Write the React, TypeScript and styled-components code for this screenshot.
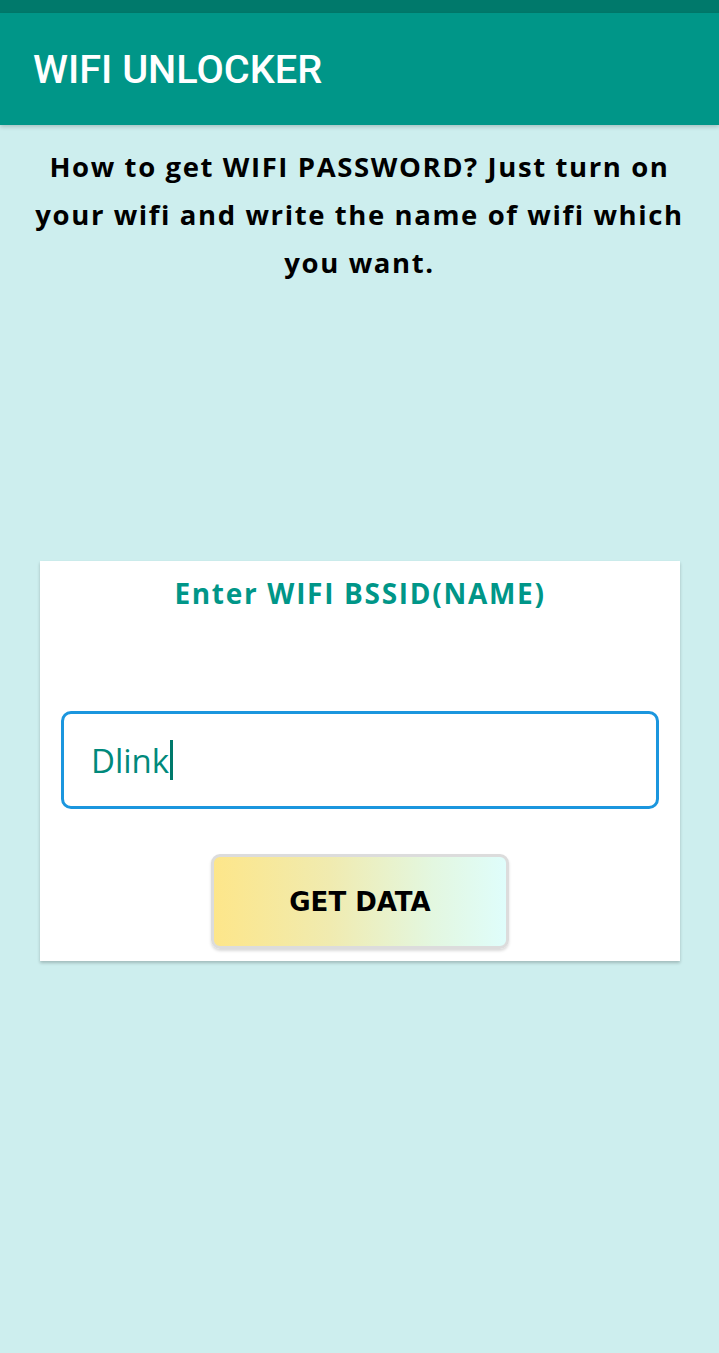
import React from "react";
import styled, { createGlobalStyle } from "styled-components";

const Global = createGlobalStyle`
  html, body { margin: 0; padding: 0; }
  body { background: #cdeeee; }
  #root { min-height: 1353px; }
`;

const Page = styled.div`
  min-height: 1353px;
  background: #cdeeee;
  display: flex;
  flex-direction: column;
`;

const StatusBar = styled.div`
  height: 13px;
  background: #00796b;
`;

const AppBar = styled.header`
  height: 112px;
  background: #009688;
  display: flex;
  align-items: center;
  padding: 0 33px;
  box-shadow: 0 2px 4px rgba(0, 0, 0, 0.18);
  position: relative;
  z-index: 1;
`;

const AppTitle = styled.h1`
  margin: 0;
  font-family: Roboto, "Liberation Sans", sans-serif;
  font-weight: 500;
  font-size: 39.7px;
  color: #ffffff;
  letter-spacing: 0;
`;

const Intro = styled.p`
  margin: 18px 30px 0;
  font-family: "Open Sans", "DejaVu Sans", sans-serif;
  font-weight: 700;
  font-size: 27.5px;
  line-height: 48px;
  color: #000;
  text-align: center;
  letter-spacing: 1.6px;
`;

const Card = styled.section`
  margin: 274px 39px 0 40px;
  height: 400px;
  background: #fff;
  box-shadow: 0 2px 3px rgba(0, 0, 0, 0.22);
  display: flex;
  flex-direction: column;
  align-items: center;
  padding: 14px 21px 0;
  box-sizing: border-box;
`;

const CardTitle = styled.h2`
  margin: 0;
  font-family: "Open Sans", "DejaVu Sans", sans-serif;
  font-weight: 700;
  font-size: 28px;
  line-height: 36px;
  color: #009688;
  letter-spacing: 1.7px;
`;

const InputBox = styled.div`
  margin-top: 100px;
  align-self: stretch;
  height: 98px;
  box-sizing: border-box;
  border: 3px solid #1b96de;
  border-radius: 10px;
  display: flex;
  align-items: center;
  padding: 0 27px;
`;

const InputText = styled.span`
  font-family: "Open Sans", Roboto, sans-serif;
  font-size: 33px;
  color: #00897b;
  display: flex;
  align-items: center;
`;

const Caret = styled.span`
  display: inline-block;
  width: 3px;
  height: 40px;
  background: #00796b;
  margin-left: 1px;
`;

const Button = styled.button`
  margin-top: 45px;
  width: 298px;
  height: 95px;
  box-sizing: border-box;
  border: 3px solid #dcdcdc;
  border-radius: 9px;
  background: linear-gradient(90deg, #fde68a 0%, #f0ebb0 40%, #e3f7e0 75%, #dffdfb 100%);
  box-shadow: 0 2px 3px rgba(0, 0, 0, 0.15);
  font-family: "DejaVu Sans", Verdana, sans-serif;
  font-weight: 700;
  font-size: 26px;
  color: #000;
  cursor: pointer;
`;

export default function App() {
  return (
    <Page>
      <Global />
      <StatusBar />
      <AppBar>
        <AppTitle>WIFI UNLOCKER</AppTitle>
      </AppBar>
      <Intro>
        How to get WIFI PASSWORD? Just turn on your wifi and write the name of wifi which you want.
      </Intro>
      <Card>
        <CardTitle>Enter WIFI BSSID(NAME)</CardTitle>
        <InputBox>
          <InputText>
            Dlink
            <Caret />
          </InputText>
        </InputBox>
        <Button>GET DATA</Button>
      </Card>
    </Page>
  );
}
